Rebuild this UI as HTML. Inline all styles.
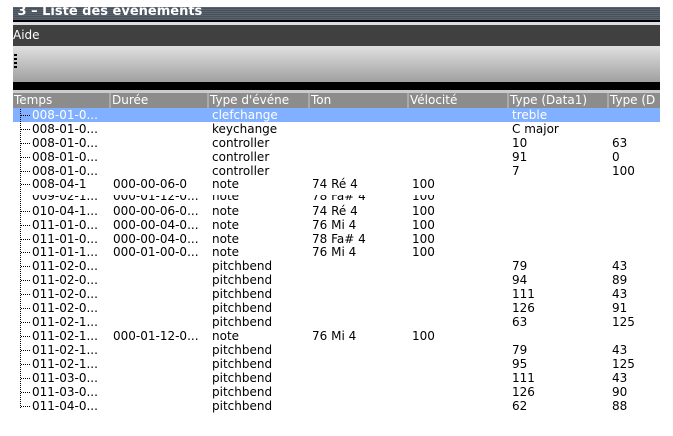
<!DOCTYPE html>
<html><head><meta charset="utf-8"><style>
*{margin:0;padding:0;box-sizing:border-box}
body{width:673px;height:436px;background:#fff;position:relative;overflow:hidden;font-family:"DejaVu Sans","Liberation Sans",sans-serif;font-size:12px;color:#000}
.a{position:absolute}
.t{position:absolute;white-space:nowrap;line-height:14px}
.title{left:13px;top:7px;width:647px;height:13px;background:repeating-linear-gradient(#5a6470 0,#5a6470 1px,#48505a 1px,#48505a 2px);color:#fff;font-weight:bold;font-size:13px;line-height:10px;overflow:hidden}
.hdr{left:13px;top:93px;width:647px;height:15px;background:#8c8c8c;color:#fff}
.hc{position:absolute;top:0;height:15px;line-height:15px;padding-left:1px;border-right:2px solid #aaa}
.vl{position:absolute;left:20px;width:0;border-left:1px dotted #000}
.hl{position:absolute;left:21px;width:9px;height:0;border-top:1px dotted #000}
</style></head><body>
<div class="a title">&nbsp;3 – Liste des événements</div>
<div class="a" style="left:13px;top:20px;width:647px;height:2px;background:#000"></div>
<div class="a" style="left:13px;top:22px;width:647px;height:3px;background:#ddd"></div>
<div class="a" style="left:13px;top:25px;width:647px;height:21px;background:#404040;color:#fff;line-height:21px">Aide</div>
<div class="a" style="left:13px;top:46px;width:647px;height:36px;background:linear-gradient(#e0e0e0,#a0a0a0)"></div>
<div class="a" style="left:14px;top:54px;width:3px;height:14px;background:repeating-linear-gradient(#000 0,#000 2px,transparent 2px,transparent 4px)"></div>
<div class="a" style="left:13px;top:82px;width:647px;height:8px;background:#000"></div>
<div class="a" style="left:13px;top:90px;width:647px;height:3px;background:#ccc"></div>
<div class="a hdr">
<div class="hc" style="left:0;width:98px">Temps</div>
<div class="hc" style="left:98px;width:98px">Durée</div>
<div class="hc" style="left:196px;width:101px">Type d'événe</div>
<div class="hc" style="left:297px;width:99px">Ton</div>
<div class="hc" style="left:396px;width:100px">Vélocité</div>
<div class="hc" style="left:496px;width:100px">Type (Data1)</div>
<div class="hc" style="left:596px;width:60px;border:none">Type (D</div>
</div>
<div class="a" style="left:13px;top:108px;width:647px;height:14px;background:#80b0ff"></div>
<div class="vl" style="top:109px;height:299px"></div>
<div id="rows"></div>
<script>
var R=[
[108,"008-01-0...","","clefchange","","","treble","",1],
[122,"008-01-0...","","keychange","","","C major",""],
[136,"008-01-0...","","controller","","","10","63"],
[150,"008-01-0...","","controller","","","91","0"],
[164,"008-01-0...","","controller","","","7","100"],
[177,"008-04-1","000-00-06-0","note","74 Ré 4","100","",""],
[189,"009-02-1...","000-01-12-0...","note","78 Fa# 4","100","",""],
[204,"010-04-1...","000-00-06-0...","note","74 Ré 4","100","",""],
[218,"011-01-0...","000-00-04-0...","note","76 Mi 4","100","",""],
[232,"011-01-0...","000-00-04-0...","note","78 Fa# 4","100","",""],
[245,"011-01-1...","000-01-00-0...","note","76 Mi 4","100","",""],
[259,"011-02-0...","","pitchbend","","","79","43"],
[273,"011-02-0...","","pitchbend","","","94","89"],
[287,"011-02-0...","","pitchbend","","","111","43"],
[301,"011-02-0...","","pitchbend","","","126","91"],
[315,"011-02-1...","","pitchbend","","","63","125"],
[329,"011-02-1...","000-01-12-0...","note","76 Mi 4","100","",""],
[343,"011-02-1...","","pitchbend","","","79","43"],
[357,"011-02-1...","","pitchbend","","","95","125"],
[371,"011-03-0...","","pitchbend","","","111","43"],
[385,"011-03-0...","","pitchbend","","","126","90"],
[399,"011-04-0...","","pitchbend","","","62","88"]];
var X=[32,113,212,312,412,512,612],h="";
R.forEach(function(r,i){
 var col=r[8]?"#fff":"#000";
 var top=r[0];
 var cl=i==5?"clip-path:inset(0 0 2px 0);":(i==6?"clip-path:inset(6px 0 0 0);":"");
 if(i!=6)h+='<div class="hl" style="top:'+(top+7)+'px"></div>';
 for(var j=0;j<7;j++){if(r[j+1])h+='<div class="t" style="left:'+X[j]+'px;top:'+top+'px;color:'+col+';'+cl+'">'+r[j+1]+'</div>';}
});
document.getElementById('rows').innerHTML=h;
</script>
</body></html>
